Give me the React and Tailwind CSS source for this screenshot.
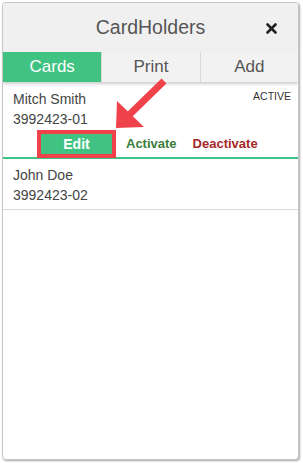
export default function App() {
  return (
    <div className="relative w-[303px] h-[463px] bg-white font-['Liberation_Sans',Arial,sans-serif]">
      {/* panel */}
      <div className="ml-[2px] pt-[2px] w-[298px]">
        <div className="h-[458px] w-[297px] border border-[#c6c6c6] rounded-[4px] shadow-[1px_1px_2px_rgba(0,0,0,0.35)] bg-white overflow-hidden flex flex-col">
          {/* header */}
          <div className="h-[49px] bg-[#f0f0f0] grid grid-cols-[1fr_auto_1fr] items-center">
            <div />
            <div className="text-[19.5px] text-[#555] pt-[1px]">CardHolders</div>
            <div className="flex justify-end pr-[21px] pt-[2px]">
              <svg width="11" height="11" viewBox="0 0 11 11">
                <path d="M1.5 1.5 L9.5 9.5 M9.5 1.5 L1.5 9.5" stroke="#222" strokeWidth="2.6" strokeLinecap="round" />
              </svg>
            </div>
          </div>

          {/* tabs */}
          <div className="grid grid-cols-3 h-[30px] text-[17px] shadow-[0_2px_3px_rgba(0,0,0,0.2)] relative">
            <div className="bg-[#40c283] text-white flex items-center justify-center">Cards</div>
            <div className="bg-[#f2f2f2] text-[#555] border-l border-[#dadada] flex items-center justify-center">Print</div>
            <div className="bg-[#f2f2f2] text-[#555] border-l border-[#dadada] flex items-center justify-center">Add</div>
          </div>

          {/* row 1 */}
          <div className="px-[10px] pt-[7px] text-[14px] text-[#444]">
            <div className="flex justify-between items-start">
              <div className="leading-[20px]">
                <div>Mitch Smith</div>
                <div>3992423-01</div>
              </div>
              <div className="text-[10.5px] text-[#333] leading-[12px] pt-[1px] mr-[-3px]">ACTIVE</div>
            </div>
            <div className="flex items-center h-[20px] mt-[5px] mb-[3px] pl-[28px] text-[13px] font-bold">
              <button className="w-[71px] h-[20px] bg-[#40c283] text-white text-[14px] font-bold outline-4 outline-solid outline-[#f0424a] relative z-10">
                Edit
              </button>
              <span className="ml-[14px] text-[#3b7d3b]">Activate</span>
              <span className="ml-[16px] text-[#a52828]">Deactivate</span>
            </div>
          </div>
          <div className="h-[2px] bg-[#40c283]" />

          {/* row 2 */}
          <div className="px-[10px] pt-[6px] pb-[4px] text-[14px] text-[#444] leading-[20px] border-b border-[#dcdcdc]">
            <div>John Doe</div>
            <div>3992423-02</div>
          </div>
        </div>
      </div>

      {/* red annotation arrow */}
      <svg className="absolute left-0 top-0 pointer-events-none z-20" width="303" height="463">
        <line x1="164" y1="81" x2="128" y2="116" stroke="#f0424a" strokeWidth="7" />
        <polygon points="116,128 117,101 144,127" fill="#f0424a" />
      </svg>
    </div>
  );
}
